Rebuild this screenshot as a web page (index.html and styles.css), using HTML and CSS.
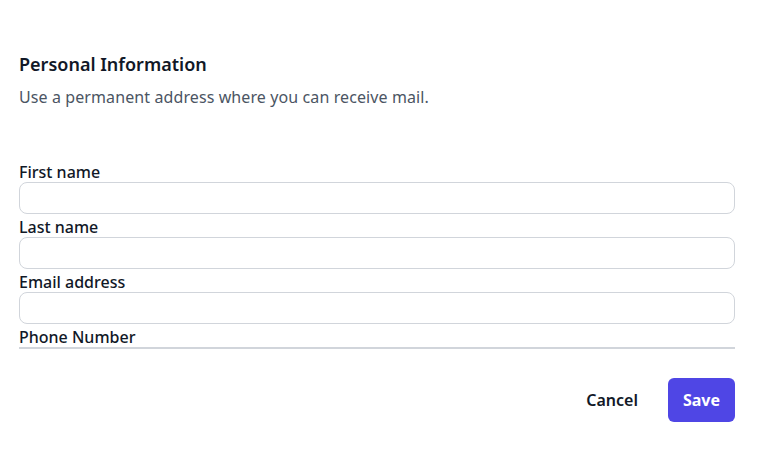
FILE: index.html
```html
<!DOCTYPE html>
<html>
<head>
<meta charset="utf-8">
<link rel="stylesheet" href="styles.css">
</head>
<body>
<form class="form">
  <div class="header">
    <h2 class="title">Personal Information</h2>
    <p class="subtitle">Use a permanent address where you can receive mail.</p>
  </div>
  <div class="fields">
    <div class="field">
      <label class="label">First name</label>
      <div class="input"></div>
    </div>
    <div class="field">
      <label class="label">Last name</label>
      <div class="input"></div>
    </div>
    <div class="field">
      <label class="label">Email address</label>
      <div class="input"></div>
    </div>
    <div class="field">
      <label class="label">Phone Number</label>
      <div class="line"></div>
    </div>
  </div>
  <div class="actions">
    <button type="button" class="cancel">Cancel</button>
    <button type="button" class="save">Save</button>
  </div>
</form>
</body>
</html>
```
FILE: styles.css
```css
html, body {
  margin: 0;
  padding: 0;
  background: #ffffff;
}
body {
  font-family: "Noto Sans", "Open Sans", sans-serif;
  color: #111827;
}
.form {
  width: 716px;
  padding: 50px 0 0 19px;
}
.header {
  display: flex;
  flex-direction: column;
}
.title {
  margin: 0;
  font-size: 18px;
  font-weight: 600;
  line-height: 28px;
}
.subtitle {
  margin: 7px 0 0;
  font-size: 16px;
  line-height: 24px;
  color: #4b5563;
  letter-spacing: 0.1px;
}
.fields {
  margin-top: 53px;
  display: flex;
  flex-direction: column;
}
.field {
  display: flex;
  flex-direction: column;
}
.label {
  font-size: 16px;
  font-weight: 500;
  line-height: 20px;
  color: #111827;
}
.input {
  height: 30px;
  border: 1px solid #d1d5db;
  border-radius: 8px;
  margin-bottom: 3px;
}
.line {
  height: 0;
  border-top: 2px solid #d1d5db;
}
.actions {
  margin-top: 29px;
  display: flex;
  justify-content: flex-end;
  align-items: center;
  gap: 30px;
}
.cancel {
  background: none;
  border: none;
  padding: 0;
  font-family: inherit;
  font-size: 16px;
  font-weight: 600;
  color: #111827;
}
.save {
  width: 67px;
  height: 44px;
  background: #4f46e5;
  color: #ffffff;
  border: none;
  border-radius: 6px;
  font-family: inherit;
  font-size: 16px;
  font-weight: 700;
}
```
